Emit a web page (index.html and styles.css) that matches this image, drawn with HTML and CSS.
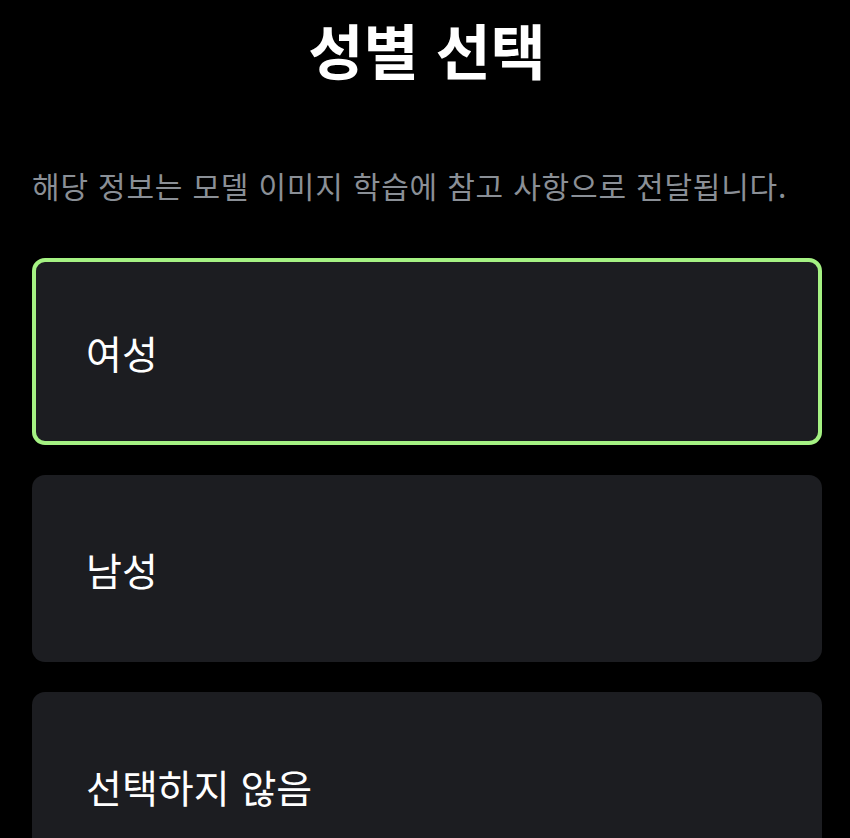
FILE: index.html
```html
<!DOCTYPE html>
<html lang="ko">
<head>
<meta charset="utf-8">
<link rel="stylesheet" href="styles.css">
</head>
<body>
<main class="page">
  <h1 class="title">성별 선택</h1>
  <p class="desc">해당 정보는 모델 이미지 학습에 참고 사항으로 전달됩니다.</p>
  <div class="options">
    <div class="option selected">여성</div>
    <div class="option">남성</div>
    <div class="option">선택하지 않음</div>
  </div>
</main>
</body>
</html>
```
FILE: styles.css
```css
html, body {
  margin: 0;
  padding: 0;
  background: #000;
  height: 100%;
  overflow: hidden;
}
.page {
  font-family: "Noto Sans CJK KR", "Noto Sans", sans-serif;
  color: #fff;
  padding: 0 28px 0 32px;
}
.title {
  margin: 0;
  padding-top: 7px;
  text-align: center;
  font-size: 60px;
  font-weight: 700;
  line-height: 84px;
}
.desc {
  margin: 76px 0 0 0;
  font-size: 30px;
  letter-spacing: 0.8px;
  line-height: 36px;
  color: #8a8f96;
  font-weight: 400;
}
.options {
  margin-top: 55px;
  display: flex;
  flex-direction: column;
  gap: 30px;
}
.option {
  box-sizing: border-box;
  height: 187px;
  border-radius: 13px;
  background: #1c1d21;
  display: flex;
  align-items: center;
  padding-left: 50px;
  font-size: 39px;
  letter-spacing: 0;
  font-weight: 400;
  border: 4px solid transparent;
}
.option.selected {
  border-color: #a5f283;
}
```
